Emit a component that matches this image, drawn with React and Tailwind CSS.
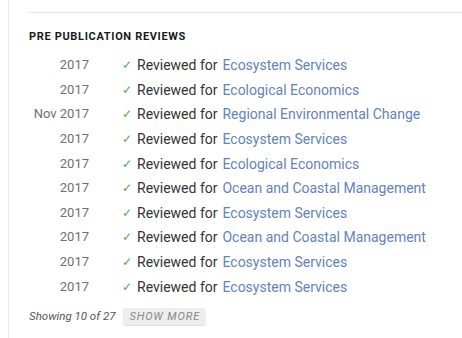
import React from "react";

const reviews = [
  { date: "2017", journal: "Ecosystem Services" },
  { date: "2017", journal: "Ecological Economics" },
  { date: "Nov 2017", journal: "Regional Environmental Change" },
  { date: "2017", journal: "Ecosystem Services" },
  { date: "2017", journal: "Ecological Economics" },
  { date: "2017", journal: "Ocean and Coastal Management" },
  { date: "2017", journal: "Ecosystem Services" },
  { date: "2017", journal: "Ocean and Coastal Management" },
  { date: "2017", journal: "Ecosystem Services" },
  { date: "2017", journal: "Ecosystem Services" },
];

const App = () => {
  return (
    <div
      className="w-[462px] h-[338px] overflow-hidden bg-white pl-2"
      style={{ fontFamily: "Roboto, 'Liberation Sans', sans-serif" }}
    >
      <div className="h-full border-l border-[#ececec] pl-5 pt-3">
        <div className="border-t border-[#e6e6e6]" />
        <h3 className="mt-[17px] text-[11px] font-bold tracking-[0.06em] text-[#1a1a1a] leading-[13px]">
          PRE PUBLICATION REVIEWS
        </h3>
        <ul className="mt-[10px]">
          {reviews.map((r, i) => (
            <li key={i} className="flex items-center h-[24.6px] text-[14px] leading-[18px]">
              <span className="w-[60px] text-right text-[13px] text-[#707070]">{r.date}</span>
              <span className="ml-[33px] w-[15px] text-[12px] text-[#4caf50]">✓</span>
              <span className="text-[#333]">Reviewed for</span>
              <span className="ml-[5px] text-[#6283bd]">{r.journal}</span>
            </li>
          ))}
        </ul>
        <div className="mt-[9px] flex items-center">
          <span className="italic text-[11.5px] text-[#555]">Showing 10 of 27</span>
          <button className="ml-[8px] h-[18px] px-[6px] rounded-[3px] bg-[#eee] border-b border-[#ddd] italic text-[11px] leading-[17px] tracking-[0.08em] text-[#888]">
            SHOW MORE
          </button>
        </div>
      </div>
    </div>
  );
};

export default App;
